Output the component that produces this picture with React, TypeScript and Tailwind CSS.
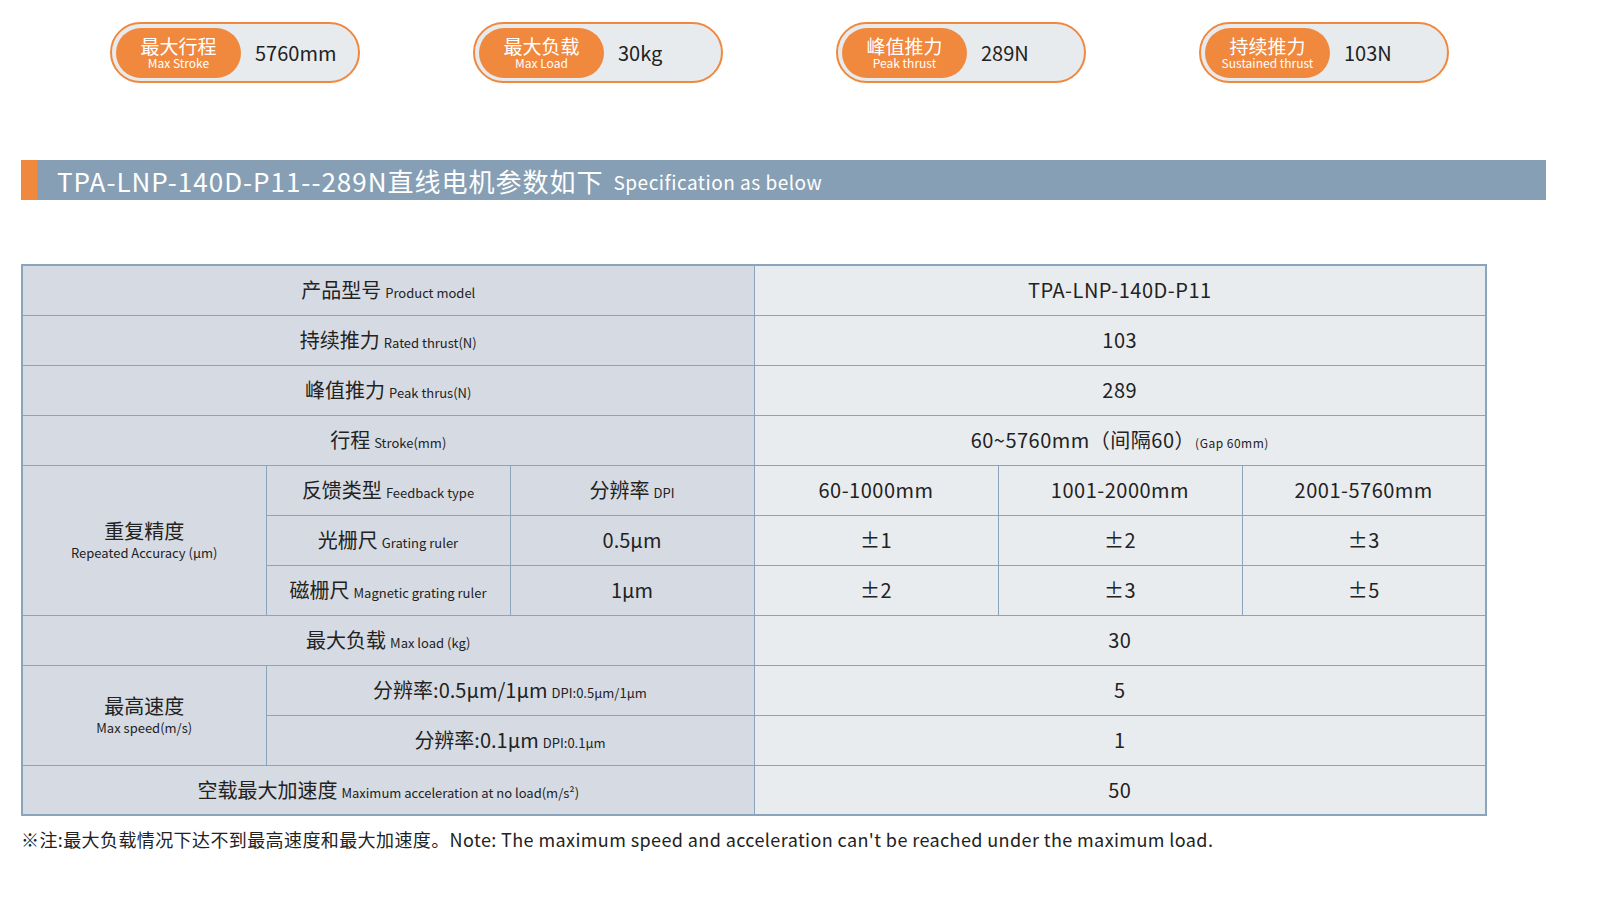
const F = { fontFamily: '"Noto Sans CJK SC", "Noto Sans", sans-serif' }

const pills = [
  ['最大行程', 'Max Stroke', '5760mm'],
  ['最大负载', 'Max Load', '30kg'],
  ['峰值推力', 'Peak thrust', '289N'],
  ['持续推力', 'Sustained thrust', '103N'],
]

const L = 'bg-[#d6dbe3] border border-[#8aa5bb] text-center align-middle'
const R = 'bg-[#e9ecef] border border-[#8aa5bb] text-center align-middle text-[20px] tracking-[0.5px]'

function Lab({ zh, en }: { zh: string; en: string }) {
  return (
    <span>
      <span className="text-[20px]">{zh}</span>
      <span className="text-[13px] ml-1">{en}</span>
    </span>
  )
}

export default function App() {
  return (
    <div className="w-[1600px] h-[902px] bg-white text-[#222] relative" style={F}>
      <div className="flex pl-[110px] gap-[113px] pt-[22px]">
        {pills.map(([zh, en, v]) => (
          <div key={zh} className="w-[250px] h-[61px] rounded-full border-2 border-[#f0883e] bg-[#e8ebee] flex items-center p-[4px]">
            <div className="w-[125px] h-[50px] rounded-full bg-[#f0883e] text-white flex flex-col items-center justify-center">
              <span className="text-[19px] leading-[21px]">{zh}</span>
              <span className="text-[12px] leading-[14px]">{en}</span>
            </div>
            <span className="ml-[14px] text-[20px]">{v}</span>
          </div>
        ))}
      </div>

      <div className="mt-[77px] ml-[21px] w-[1525px] h-[40px] bg-[#879fb4] flex items-center text-white">
        <div className="w-[16px] h-full bg-[#f0883e]" />
        <span className="ml-[20px] text-[26px] tracking-[1px]">TPA-LNP-140D-P11--289N直线电机参数如下</span>
        <span className="ml-[10px] text-[19px] mt-[4px] tracking-[0.5px]">Specification as below</span>
      </div>

      <table className="mt-[64px] ml-[21px] border-collapse border-2 border-[#8aa5bb] table-fixed w-[1466px]">
        <colgroup>
          {[0, 1, 2, 3, 4, 5].map((i) => <col key={i} className="w-[244px]" />)}
        </colgroup>
        <tbody className="[&_td]:h-[50px]">
          <tr><td colSpan={3} className={L}><Lab zh="产品型号" en="Product model" /></td><td colSpan={3} className={R}>TPA-LNP-140D-P11</td></tr>
          <tr><td colSpan={3} className={L}><Lab zh="持续推力" en="Rated thrust(N)" /></td><td colSpan={3} className={R}>103</td></tr>
          <tr><td colSpan={3} className={L}><Lab zh="峰值推力" en="Peak thrus(N)" /></td><td colSpan={3} className={R}>289</td></tr>
          <tr><td colSpan={3} className={L}><Lab zh="行程" en="Stroke(mm)" /></td><td colSpan={3} className={R}>60~5760mm（间隔60）<span className="text-[12px]">(Gap 60mm)</span></td></tr>
          <tr>
            <td rowSpan={3} className={L}><div className="text-[20px] leading-tight">重复精度</div><div className="text-[13px]">Repeated Accuracy (μm)</div></td>
            <td className={L}><Lab zh="反馈类型" en="Feedback type" /></td>
            <td className={L}><Lab zh="分辨率" en="DPI" /></td>
            <td className={R}>60-1000mm</td><td className={R}>1001-2000mm</td><td className={R}>2001-5760mm</td>
          </tr>
          <tr><td className={L}><Lab zh="光栅尺" en="Grating ruler" /></td><td className={L + ' text-[20px]'}>0.5μm</td><td className={R}>±1</td><td className={R}>±2</td><td className={R}>±3</td></tr>
          <tr><td className={L}><Lab zh="磁栅尺" en="Magnetic grating ruler" /></td><td className={L + ' text-[20px]'}>1μm</td><td className={R}>±2</td><td className={R}>±3</td><td className={R}>±5</td></tr>
          <tr><td colSpan={3} className={L}><Lab zh="最大负载" en="Max load (kg)" /></td><td colSpan={3} className={R}>30</td></tr>
          <tr>
            <td rowSpan={2} className={L}><div className="text-[20px] leading-tight">最高速度</div><div className="text-[13px]">Max speed(m/s)</div></td>
            <td colSpan={2} className={L}><Lab zh="分辨率:0.5μm/1μm" en="DPI:0.5μm/1μm" /></td>
            <td colSpan={3} className={R}>5</td>
          </tr>
          <tr><td colSpan={2} className={L}><Lab zh="分辨率:0.1μm" en="DPI:0.1μm" /></td><td colSpan={3} className={R}>1</td></tr>
          <tr><td colSpan={3} className={L}><Lab zh="空载最大加速度" en="Maximum acceleration at no load(m/s²)" /></td><td colSpan={3} className={R}>50</td></tr>
        </tbody>
      </table>

      <div className="ml-[21px] mt-[10px] text-[18px] tracking-[0.4px]">※注:最大负载情况下达不到最高速度和最大加速度。Note: The maximum speed and acceleration can't be reached under the maximum load.</div>
    </div>
  )
}
